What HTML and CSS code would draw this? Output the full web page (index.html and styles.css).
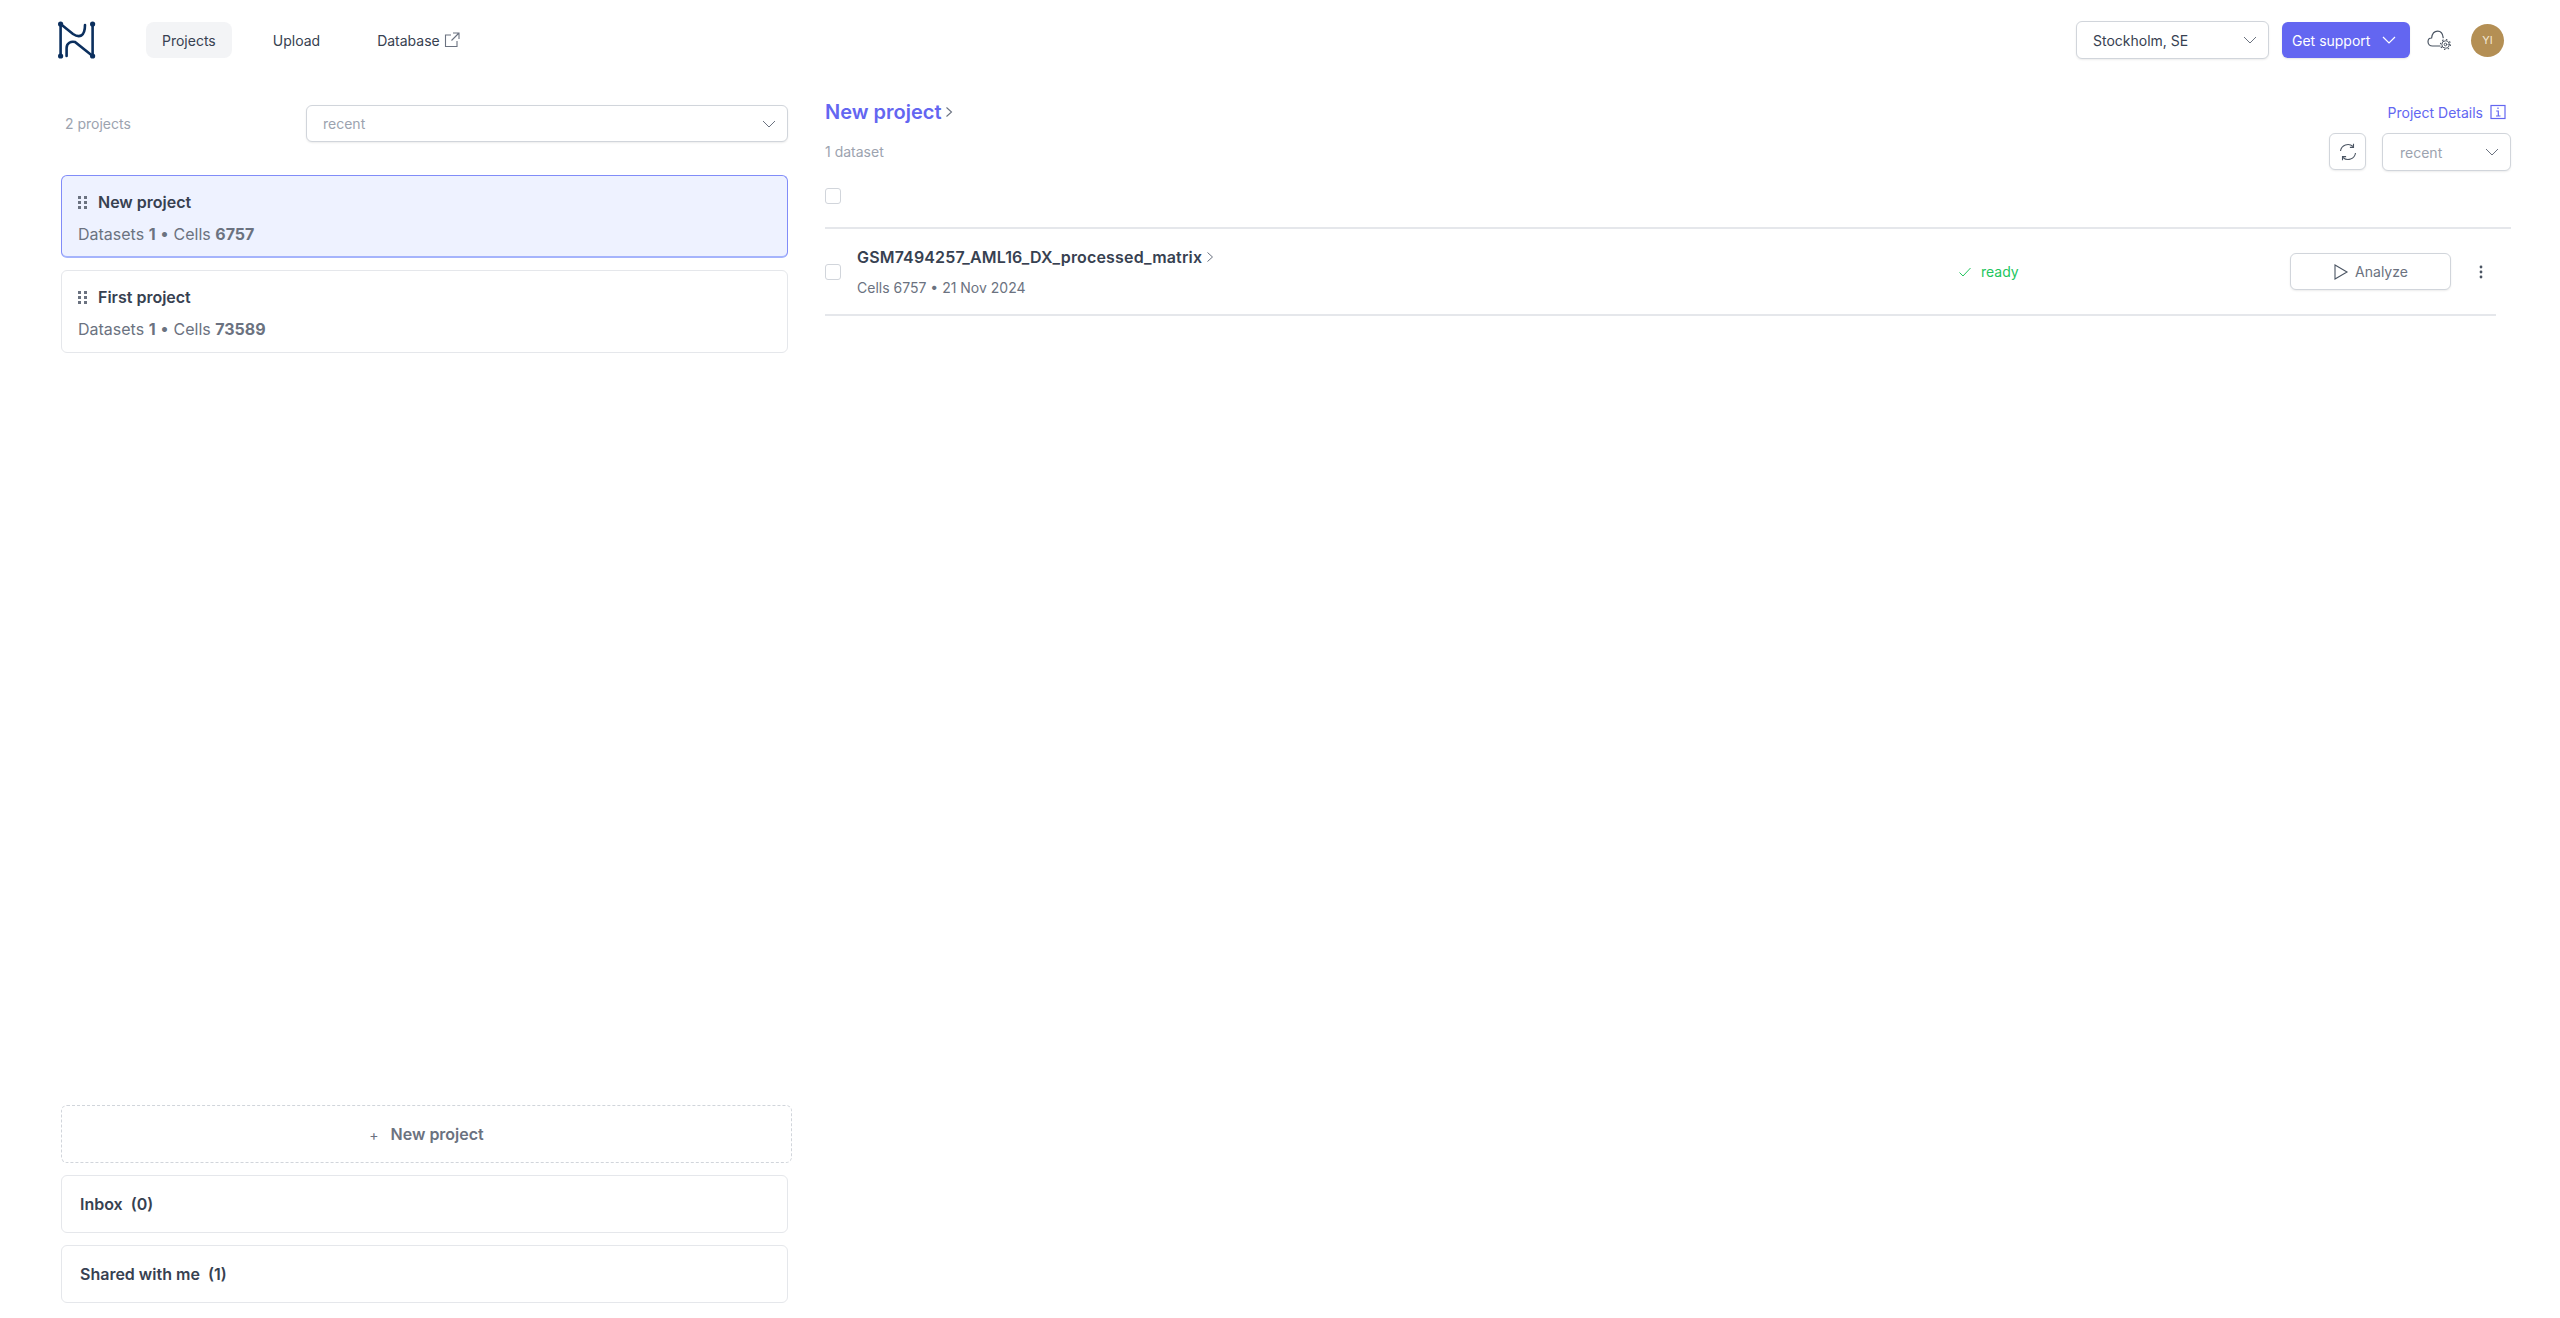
FILE: index.html
```html
<!DOCTYPE html>
<html lang="en">
<head>
<meta charset="utf-8">
<title>Projects</title>
<link rel="stylesheet" href="styles.css">
</head>
<body>
<header class="topbar">
  <svg class="logo" width="38" height="38" viewBox="0 0 38 38" fill="none" stroke="#0b2f5e" stroke-width="2.6" stroke-linecap="round">
    <path d="M2.6 3V35M34.6 3V35"/>
    <path d="M2.6 3L15 13C21 17 27 16 27 4"/>
    <path d="M8.6 35V27C8.6 22 13 20 17 21L34.6 35"/>
    <g fill="#0b2f5e" stroke="none"><circle cx="2.6" cy="3" r="2.6"/><circle cx="34.6" cy="3" r="2.6"/><circle cx="2.6" cy="35" r="2.6"/><circle cx="34.6" cy="35" r="2.6"/></g>
  </svg>
  <nav class="nav">
    <a class="nav-item is-active">Projects</a>
    <a class="nav-item">Upload</a>
    <a class="nav-item">Database
      <svg width="16" height="16" viewBox="0 0 16 16" fill="none" stroke="#6b7280" stroke-width="1.1"><path d="M7 3H1.5V14.5H13V9M9 1H15V7M15 1L7.5 8.5"/></svg>
    </a>
  </nav>
  <div class="top-actions">
    <div class="select select-region"><span>Stockholm, SE</span>
      <svg class="chev" width="16" height="16" viewBox="0 0 16 16" fill="none" stroke="#6b7280" stroke-width="1"><path d="M2 5L8 11L14 5"/></svg>
    </div>
    <button class="support">Get support
      <svg width="16" height="16" viewBox="0 0 16 16" fill="none" stroke="#fff" stroke-width="1.2"><path d="M2 5L8 11L14 5"/></svg>
    </button>
    <svg class="cloud" width="24" height="20" viewBox="0 0 24 20" fill="none" stroke="#4b5563" stroke-width="1.2" stroke-linecap="round"><path d="M13 16H5.5C2.8 16 1 14 1 11.7C1 9.4 2.7 8 4.6 8C5.2 3.5 8 1.2 10.7 1.2C13.7 1.2 15.7 3.6 16.2 7.6"/><circle cx="18.5" cy="14.5" r="3.7" stroke-width="1"/><circle cx="18.5" cy="14.5" r="5" stroke-width="1.2" stroke-dasharray="1.4 2.5" stroke-linecap="butt"/><circle cx="18.5" cy="14.5" r="1.3" stroke-width="1"/></svg>
    <div class="avatar">YI</div>
  </div>
</header>
<main class="layout">
  <aside class="sidebar">
    <div class="side-head">
      <span class="count">2 projects</span>
      <div class="select select-sort"><span>recent</span>
        <svg class="chev" width="16" height="16" viewBox="0 0 16 16" fill="none" stroke="#6b7280" stroke-width="1"><path d="M2 5L8 11L14 5"/></svg>
      </div>
    </div>
    <ul class="projects">
      <li class="project is-selected">
        <div class="project-title">
          <svg class="grip" width="9" height="14" viewBox="0 0 9 14" fill="#6b7280"><rect x="0" y="1" width="3" height="3"/><rect x="6" y="1" width="3" height="3"/><rect x="0" y="6" width="3" height="3"/><rect x="6" y="6" width="3" height="3"/><rect x="0" y="11" width="3" height="3"/><rect x="6" y="11" width="3" height="3"/></svg>
          New project
        </div>
        <div class="project-meta">Datasets <b>1</b> • Cells <b>6757</b></div>
      </li>
      <li class="project">
        <div class="project-title">
          <svg class="grip" width="9" height="14" viewBox="0 0 9 14" fill="#6b7280"><rect x="0" y="1" width="3" height="3"/><rect x="6" y="1" width="3" height="3"/><rect x="0" y="6" width="3" height="3"/><rect x="6" y="6" width="3" height="3"/><rect x="0" y="11" width="3" height="3"/><rect x="6" y="11" width="3" height="3"/></svg>
          First project
        </div>
        <div class="project-meta">Datasets <b>1</b> • Cells <b>73589</b></div>
      </li>
    </ul>
    <div class="side-foot">
      <button class="new-project"><span class="plus">+</span>New project</button>
      <div class="fold">Inbox&nbsp; (0)</div>
      <div class="fold">Shared with me&nbsp; (1)</div>
    </div>
  </aside>
  <section class="content">
    <div class="content-head">
      <div class="content-info">
        <h1 class="content-title">New project
          <svg width="10" height="12" viewBox="0 0 10 12" fill="none" stroke="#6b7280" stroke-width="1.1"><path d="M2.5 1.5L7.5 6L2.5 10.5"/></svg>
        </h1>
        <div class="count">1 dataset</div>
      </div>
      <div class="content-tools">
        <a class="details">Project Details
          <svg width="16" height="16" viewBox="0 0 16 16" fill="none" stroke="#6366f1" stroke-width="1.2"><rect x="1" y="1.5" width="14" height="13"/><path d="M6.2 7H8.3V12M6 12H10.5M8 3.6V5"/></svg>
        </a>
        <div class="tool-row">
          <button class="icon-btn" aria-label="Refresh">
            <svg width="18" height="18" viewBox="0 0 18 18" fill="none" stroke="#4b5563" stroke-width="1.1"><path d="M1.5 8A7.5 7.5 0 0 1 14 3.5M16.5 10A7.5 7.5 0 0 1 4 14.5"/><path d="M14.5 0.8V4.4H10.9M3.5 17.2V13.6H7.1"/></svg>
          </button>
          <div class="select select-small"><span>recent</span>
            <svg class="chev" width="16" height="16" viewBox="0 0 16 16" fill="none" stroke="#6b7280" stroke-width="1"><path d="M2 5L8 11L14 5"/></svg>
          </div>
        </div>
      </div>
    </div>
    <div class="check-row"><span class="check"></span></div>
    <div class="dataset">
      <span class="check"></span>
      <div class="dataset-info">
        <div class="dataset-name">GSM7494257_AML16_DX_processed_matrix
          <svg width="10" height="12" viewBox="0 0 10 12" fill="none" stroke="#6b7280" stroke-width="1"><path d="M2.5 1.5L7.5 6L2.5 10.5"/></svg>
        </div>
        <div class="dataset-meta">Cells 6757 • 21 Nov 2024</div>
      </div>
      <div class="status">
        <svg width="14" height="12" viewBox="0 0 14 12" fill="none" stroke="#22c55e" stroke-width="1"><path d="M1.5 6.5L5 10L12.5 2"/></svg>
        ready
      </div>
      <button class="analyze">
        <svg width="16" height="18" viewBox="0 0 16 18" fill="none" stroke="#4b5563" stroke-width="1.1"><path d="M2 2V16L14 9Z"/></svg>
        Analyze
      </button>
      <svg class="more" width="4" height="14" viewBox="0 0 4 14" fill="#4b5563"><circle cx="2" cy="2" r="1.4"/><circle cx="2" cy="7" r="1.4"/><circle cx="2" cy="12" r="1.4"/></svg>
    </div>
  </section>
</main>
</body>
</html>
```
FILE: styles.css
```css
* { box-sizing: border-box; }
html, body { margin: 0; height: 100%; }
body {
  height: 1318px;
  display: flex;
  flex-direction: column;
  overflow: hidden;
  background: #fff;
  color: #374151;
  font-family: Inter, "Liberation Sans", sans-serif;
  font-size: 14px;
}
button { font-family: inherit; cursor: pointer; }

.topbar {
  display: flex;
  align-items: center;
  height: 80px;
  padding: 0 56px 0 58px;
  flex: none;
}
.logo { flex: none; margin-right: 50px; }
.nav { display: flex; align-items: center; gap: 25px; }
.nav-item {
  display: flex;
  align-items: center;
  gap: 4px;
  height: 36px;
  padding: 0 16px;
  border-radius: 8px;
  color: #374151;
  font-size: 14px;
}
.nav-item.is-active { background: #f3f4f6; }
.top-actions { margin-left: auto; display: flex; align-items: center; }

.select {
  display: flex;
  align-items: center;
  justify-content: space-between;
  background: #fff;
  border: 1px solid #d1d5db;
  border-radius: 6px;
  box-shadow: 0 1px 2px rgba(0,0,0,.08);
  color: #9ca3af;
  font-size: 14px;
}
.select-region { width: 193px; height: 38px; padding: 0 10px 0 16px; color: #374151; }
.select-sort { width: 482px; height: 37px; padding: 0 10px 0 16px; }
.select-small { width: 129px; height: 38px; padding: 0 10px 0 17px; }
.support {
  display: flex;
  align-items: center;
  justify-content: space-between;
  width: 128px;
  height: 36px;
  margin-left: 13px;
  padding: 0 13px 0 10px;
  border: 0;
  border-radius: 6px;
  background: #6366f1;
  box-shadow: 0 1px 2px rgba(0,0,0,.1);
  color: #fff;
  font-size: 14px;
}
.cloud { margin-left: 17px; }
.avatar {
  display: flex;
  align-items: center;
  justify-content: center;
  width: 33px;
  height: 33px;
  margin-left: 20px;
  border-radius: 50%;
  background: #b48f54;
  color: #f3e8d5;
  font-size: 11px;
}

.layout {
  flex: 1;
  display: flex;
  align-items: stretch;
  min-height: 0;
  padding: 0 49px 15px 61px;
  gap: 37px;
}
.sidebar { width: 727px; flex: none; display: flex; flex-direction: column; }
.side-head {
  display: flex;
  align-items: center;
  justify-content: space-between;
  padding: 25px 0 0 4px;
}
.count { color: #9ca3af; font-size: 14px; }
.projects { list-style: none; margin: 33px 0 0; padding: 0; display: flex; flex-direction: column; gap: 12px; }
.project {
  height: 83px;
  padding: 14px 16px;
  border: 1px solid #e5e7eb;
  border-radius: 6px;
  background: #fff;
}
.project.is-selected {
  border: 1px solid #818cf8;
  border-bottom-width: 2px;
  border-bottom-color: #a5b4fc;
  background: #eef2ff;
}
.project-title {
  display: flex;
  align-items: center;
  gap: 11px;
  height: 24px;
  font-size: 16px;
  font-weight: 600;
  color: #374151;
}
.project-meta { margin-top: 8px; color: #6b7280; font-size: 16px; line-height: 24px; }
.project-meta b { font-weight: 700; }

.side-foot { margin-top: auto; display: flex; flex-direction: column; gap: 12px; }
.new-project {
  width: 731px;
  height: 58px;
  border: 1px dashed #d1d5db;
  border-radius: 6px;
  background: #fff;
  color: #6b7280;
  font-size: 16px;
  font-weight: 600;
}
.plus { margin-right: 12px; font-weight: 400; font-size: 14px; }
.fold {
  display: flex;
  align-items: center;
  height: 58px;
  padding: 0 18px;
  border: 1px solid #e5e7eb;
  border-radius: 6px;
  font-size: 16px;
  font-weight: 600;
  color: #374151;
}

.content { flex: 1; min-width: 0; }
.content-head { display: flex; justify-content: space-between; padding-top: 19px; }
.content-title {
  display: flex;
  align-items: center;
  gap: 3px;
  margin: 0;
  height: 26px;
  color: #6366f1;
  font-size: 20px;
  font-weight: 600;
}
.content-info .count { margin-top: 17px; line-height: 20px; }
.content-tools { display: flex; flex-direction: column; align-items: flex-end; }
.details {
  display: flex;
  align-items: center;
  gap: 7px;
  height: 26px;
  margin-right: 5px;
  color: #6366f1;
  font-size: 14px;
}
.tool-row { display: flex; align-items: flex-start; gap: 16px; margin-top: 8px; }
.icon-btn {
  display: flex;
  align-items: center;
  justify-content: center;
  width: 37px;
  height: 37px;
  padding: 0;
  background: #fff;
  border: 1px solid #d1d5db;
  border-radius: 6px;
  box-shadow: 0 1px 2px rgba(0,0,0,.08);
}
.check-row { height: 57px; margin-top: 1px; padding-top: 16px; border-bottom: 2px solid #e5e7eb; }
.check {
  display: block;
  width: 16px;
  height: 16px;
  border: 1px solid #d1d5db;
  border-radius: 3px;
  flex: none;
}
.dataset {
  display: flex;
  align-items: center;
  width: 1671px;
  height: 87px;
  border-bottom: 2px solid #e5e7eb;
}
.dataset-info { margin-left: 16px; width: 1101px; }
.dataset-name {
  display: flex;
  align-items: center;
  gap: 3px;
  color: #374151;
  font-size: 16px;
  font-weight: 600;
  letter-spacing: .16px;
  line-height: 24px;
}
.dataset-meta { margin-top: 9px; color: #6b7280; font-size: 14px; line-height: 20px; }
.status { display: flex; align-items: center; gap: 9px; width: 332px; color: #22c55e; font-size: 14px; }
.analyze {
  display: flex;
  align-items: center;
  justify-content: center;
  gap: 6px;
  width: 161px;
  height: 37px;
  background: #fff;
  border: 1px solid #d1d5db;
  border-radius: 6px;
  box-shadow: 0 1px 2px rgba(0,0,0,.08);
  color: #6b7280;
  font-size: 14px;
}
.more { margin-left: 28px; }
```
